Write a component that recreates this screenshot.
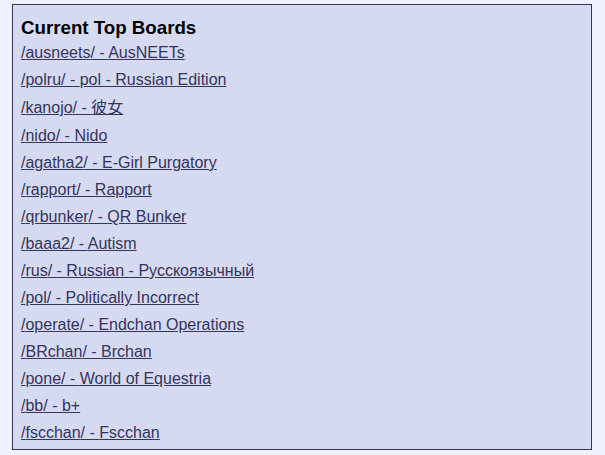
const boards = [
  { uri: "ausneets", title: "AusNEETs" },
  { uri: "polru", title: "pol - Russian Edition" },
  { uri: "kanojo", title: "彼女", tall: true },
  { uri: "nido", title: "Nido" },
  { uri: "agatha2", title: "E-Girl Purgatory" },
  { uri: "rapport", title: "Rapport" },
  { uri: "qrbunker", title: "QR Bunker" },
  { uri: "baaa2", title: "Autism" },
  { uri: "rus", title: "Russian - Русскоязычный" },
  { uri: "pol", title: "Politically Incorrect" },
  { uri: "operate", title: "Endchan Operations" },
  { uri: "BRchan", title: "Brchan" },
  { uri: "pone", title: "World of Equestria" },
  { uri: "bb", title: "b+" },
  { uri: "fscchan", title: "Fscchan" },
];

export default function App() {
  return (
    <div className="min-h-[455px] bg-[#eef2ff] pl-[12px] pt-[4px] font-['Liberation_Sans','Noto_Sans_CJK_JP',sans-serif]">
      <div className="w-[580px] border border-[#34345c] bg-[#d6daf0] pl-[8px] pt-[12px] pb-[3px]">
        <h3 className="text-[18.72px] font-bold leading-[22px] text-black">
          Current Top Boards
        </h3>
        {boards.map((b) => (
          <div
            key={b.uri}
            className={b.tall ? "leading-[29px]" : "leading-[27px]"}
          >
            <a
              href={"#" + b.uri}
              className="text-[16px] text-[#34345c] underline"
            >
              /{b.uri}/ - {b.title}
            </a>
          </div>
        ))}
      </div>
    </div>
  );
}
